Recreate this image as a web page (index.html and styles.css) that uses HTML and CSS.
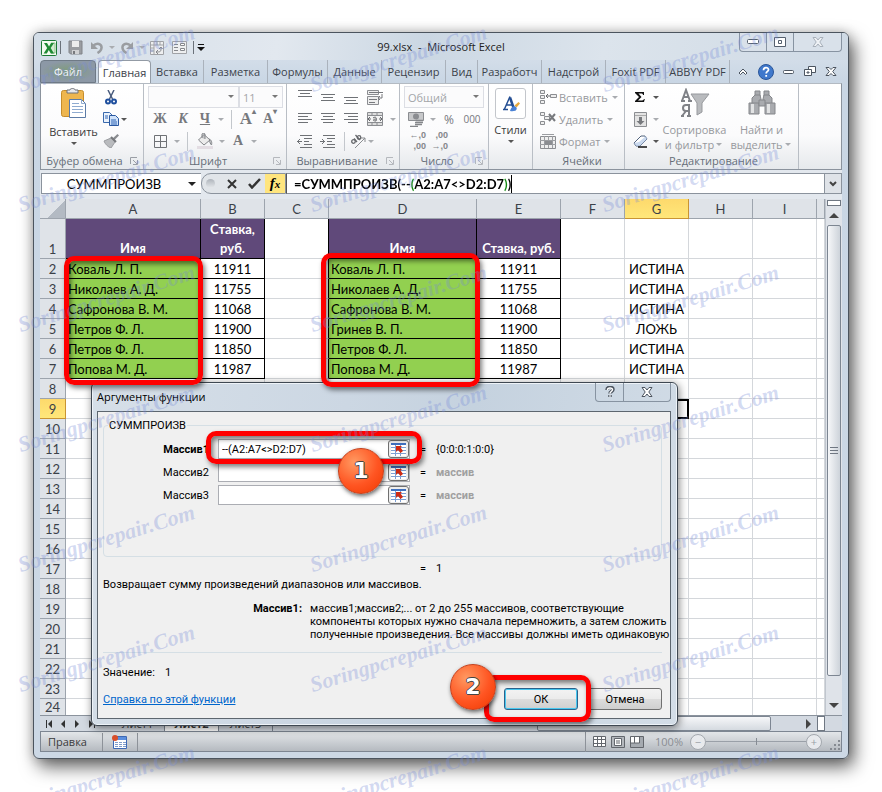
FILE: index.html
```html
<!DOCTYPE html>
<html lang="ru">

<head>
    <meta charset="utf-8">
    <title>99.xlsx - Microsoft Excel</title>
    <link rel="stylesheet" href="styles.css">
</head>

<body>
    <div class="window">
        <header class="titlebar">
            <div class="quick">
                <svg width="16" height="16" viewBox="0 0 16 16"><rect x=".5" y=".5" width="15" height="15" rx="1" fill="#f3faf0" stroke="#1c7a35"/><path d="M10 3h4v10h-4" fill="#d5ecd0" stroke="#8cc08a"/><path d="M3 3h3l2 3.500 2-3.500h3L9.700 8l3.300 5.500H9.800L7.800 10l-2 3.500H2.600L6.200 8z" fill="#1f8b34"/></svg>
                <span class="bar"></span>
                <button class="tool w-22" aria-label="Сохранить"><svg width="15" height="15" viewBox="0 0 15 15"><path d="M1 1h13v13H2.500L1 12.500z" fill="#9a9da1" stroke="#808388"/><path d="M4 1h7v6H4z" fill="#eceded"/><path d="M4 10h7v4H4z" fill="#d0d1d3"/><path d="M5 11h2v3H5z" fill="#77797d"/></svg></button>
                <button class="tool w-22" aria-label="Отменить"><svg width="14" height="13" viewBox="0 0 14 13"><path d="M3 5c4-4 9-2 8.500 2-.2 2-2 4-4 5" fill="none" stroke="#9a9da1" stroke-width="2.500"/><path d="M1 1v7h7z" fill="#9a9da1"/></svg></button>
                <i class="arr dim"></i>
                <button class="tool w-22" aria-label="Вернуть"><svg width="14" height="13" viewBox="0 0 14 13"><path d="M11 5C7 1 2 3 2.500 7c.2 2 2 4 4 5" fill="none" stroke="#9a9da1" stroke-width="2.500"/><path d="M13 1v7H6z" fill="#9a9da1"/></svg></button>
                <i class="arr dim"></i>
                <button class="tool w-22" aria-label="Сводная таблица"><svg width="14" height="14" viewBox="0 0 14 14"><path d="M.5.5h13v13H.5z" fill="#eeeff0" stroke="#a0a2a6"/><path d="M1 4h12M4 1v12M7 1v3M10 1v3M1 7h3M1 10h3" stroke="#a0a2a6"/><path d="M7 11c4 0 4-1 4-4M9 8l2-2 1.500 2M8 9l-2 2 2 2" fill="none" stroke="#85878c"/></svg></button>
                <button class="tool w-22" aria-label="Форма"><svg width="15" height="13" viewBox="0 0 15 13"><path d="M.5.5h14v12H.5z" fill="#eeeff0" stroke="#a0a2a6"/><path d="M2 3.500h4M2 6.500h4M2 9.500h4" stroke="#85878c"/><path d="M8.500 2.500h4v2h-4zM8.500 7.500h4v2h-4z" fill="#fff" stroke="#85878c"/></svg></button>
                <span class="bar"></span>
                <button class="tool w-8" aria-label="Настройка панели"><svg width="8" height="7" viewBox="0 0 8 7"><path d="M1 0h6v1H1zM0 3h8L4 7z" fill="#111"/></svg></button>
            </div>
            <h1>99.xlsx &nbsp;-&nbsp; Microsoft Excel</h1>
            <div class="caption">
                <button class="cap-min" aria-label="Свернуть"><svg width="12" height="6" viewBox="0 0 12 6"><rect x=".5" y=".5" width="11" height="4" rx="1" fill="#fff" stroke="#55606e"/></svg></button>
                <button class="cap-min" aria-label="Развернуть"><svg width="12" height="10" viewBox="0 0 12 10"><path d="M.5.5h11v9H.5zM4.500 3.500h3v3h-3z" fill="#fff" stroke="#55606e"/></svg></button>
                <button class="cap-close" aria-label="Закрыть"><svg width="12" height="10" viewBox="0 0 12 10"><path d="M1 .5h3l2 2.500L8 .5h3L7.800 5 11 9.500H8L6 7 4 9.500H1L4.200 5z" fill="#eef1f5" stroke="#a8b0ba"/></svg></button>
            </div>
        </header>

        <nav class="tabs">
            <button class="tab file">Файл</button>
            <button class="tab active">Главная</button>
            <button class="tab t-52">Вставка</button>
            <button class="tab t-64">Разметка</button>
            <button class="tab t-60">Формулы</button>
            <button class="tab t-54">Данные</button>
            <button class="tab t-64">Рецензир</button>
            <button class="tab t-32">Вид</button>
            <button class="tab t-64">Разработч</button>
            <button class="tab t-64">Надстрой</button>
            <button class="tab t-60">Foxit PDF</button>
            <button class="tab t-64">ABBYY PDF</button>
            <div class="tab-tools">
                <svg width="10" height="8" viewBox="0 0 10 8"><path d="M1 5l4-4 4 4-1.500 1.500L5 4 2.500 6.500z" fill="#fff" stroke="#4c5560"/></svg>
                <svg width="16" height="16" viewBox="0 0 16 16"><circle cx="8" cy="8" r="7.500" fill="#3f78cc" stroke="#2a5699"/><path d="M5.500 6.200c0-3.400 5-3.300 5-.5 0 1.700-2.300 1.800-2.300 3.800M8.200 11v1.700" fill="none" stroke="#fff" stroke-width="1.800"/></svg>
                <svg width="11" height="6" viewBox="0 0 11 6"><rect x=".5" y="1.500" width="10" height="3" rx="1" fill="#fff" stroke="#4c5560"/></svg>
                <svg width="12" height="11" viewBox="0 0 12 11"><path d="M4.500.5h7v6h-7z" fill="#fff" stroke="#4c5560"/><path d="M.5 3.500h7v6h-7zM3 6h2v1H3z" fill="#fff" stroke="#4c5560"/></svg>
                <svg width="12" height="9" viewBox="0 0 12 9"><path d="M1 .5h3l2 2 2-2h3l-3.300 4L11 8.500H8l-2-2-2 2H1l3.300-4z" fill="#fff" stroke="#4c5560"/></svg>
            </div>
        </nav>

        <div class="ribbon">
            <section class="group g-clip">
                <div class="group-body">
                    <button class="big w-58">
                        <svg width="28" height="32" viewBox="0 0 28 32"><rect x="1.500" y="2.500" width="22" height="26" rx="2" fill="#eeb64f" stroke="#c68d2c"/><path d="M7 5V2h3c0-2 5-2 5 0h3v3z" fill="#e8e9ec" stroke="#6d7178"/><path d="M9.500 11.500h12l4 4v14h-16z" fill="#fff" stroke="#5c7ba6"/><path d="M21.500 11.500v4h4M12 15.500h7M12 18.500h11M12 21.500h11M12 24.500h11" fill="none" stroke="#8fabd0"/></svg>
                        <span>Вставить</span>
                        <i class="arr"></i>
                    </button>
                    <div class="rows">
                        <div class="row"><button class="tool w-16" aria-label="Вырезать"><svg width="12" height="15" viewBox="0 0 12 15"><path d="M3 0l4.500 9M9 0L4.500 9" stroke="#4a5c7d" stroke-width="1.500"/><circle cx="3" cy="11.500" r="2" fill="none" stroke="#1f4f9e" stroke-width="2"/><circle cx="9" cy="11.500" r="2" fill="none" stroke="#1f4f9e" stroke-width="2"/></svg></button></div>
                        <div class="row"><button class="tool w-16" aria-label="Копировать"><svg width="16" height="14" viewBox="0 0 16 14"><path d="M.5.5h6l3 3v7h-9z" fill="#eaf2fc" stroke="#3a69ad"/><path d="M6.500 3.500h6l3 3v7h-9z" fill="#cfe2fa" stroke="#2a58a0"/><path d="M2 4h3M2 6h3M8 8h5M8 10h6M8 12h6" stroke="#2f65b5"/></svg></button><i class="arr"></i></div>
                        <div class="row"><button class="tool w-16" aria-label="Формат по образцу"><svg width="16" height="14" viewBox="0 0 16 14"><path d="M14.500 0L16 1.500l-5 5L9 5z" fill="#8a8c90"/><path d="M1 7l7-3 4 4-4 6c-3-1-6-4-7-7z" fill="#b9bbbe" stroke="#9b9da1"/><path d="M8 3l5 5" stroke="#77797d" stroke-width="2"/></svg></button></div>
                    </div>
                </div>
                <h2>Буфер обмена<svg class="launch" width="8" height="8" viewBox="0 0 8 8"><path d="M.5 7V.5H7M3 3l4 4M7.500 3v4.500H3" fill="none" stroke="#9a9ea5"/></svg></h2>
            </section>

            <section class="group g-font">
                <div class="rows">
                    <div class="row">
                        <label class="combo c-90"><select aria-label="Шрифт"><option></option></select></label>
                        <label class="combo c-44"><select aria-label="Размер"><option>11</option></select></label>
                    </div>
                    <div class="row">
                        <button class="tool w-24 glyph"><b>Ж</b></button>
                        <button class="tool w-22 glyph"><b><em>К</em></b></button>
                        <button class="tool w-22 glyph"><b><u>Ч</u></b></button>
                        <i class="arr dim"></i>
                        <span class="sep"></span>
                        <button class="tool w-22 glyph large">A<sup>▴</sup></button>
                        <button class="tool w-22 glyph">A<sup>▾</sup></button>
                    </div>
                    <div class="row">
                        <button class="tool w-24" aria-label="Границы"><svg width="13" height="13" viewBox="0 0 13 13"><path d="M.5.5h12v12H.5zM6.500.5v12M.5 6.500h12" fill="none" stroke="#6f7276"/></svg></button>
                        <i class="arr dim"></i>
                        <span class="sep"></span>
                        <button class="tool w-24" aria-label="Заливка"><svg width="16" height="16" viewBox="0 0 16 16"><path d="M7 1.500l6 5.500-6 5-5.500-5z" fill="#ececec" stroke="#85878b"/><path d="M5 5V1c0-1 3-1 3 0v5M12 6c3 1 3 4 2.500 6-1-1-2-3-2-5" fill="#85878b" stroke="#85878b" fill-opacity=".4"/><path d="M0 13h16v3H0z" fill="#e3dde3"/></svg></button>
                        <i class="arr dim"></i>
                        <button class="tool w-22 glyph">A</button>
                        <i class="arr dim"></i>
                    </div>
                </div>
                <h2>Шрифт<svg class="launch" width="8" height="8" viewBox="0 0 8 8"><path d="M.5 7V.5H7M3 3l4 4M7.500 3v4.500H3" fill="none" stroke="#b5b8bd"/></svg></h2>
            </section>

            <section class="group g-align">
                <div class="rows">
                    <div class="row">
                        <button class="tool w-23" aria-label="По верхнему краю"><svg width="14" height="16" viewBox="0 0 14 16"><path d="M0 1.500h14M2 4.500h10M0 7.500h14" stroke="#6f7276"/></svg></button>
                        <button class="tool w-23" aria-label="По середине"><svg width="14" height="16" viewBox="0 0 14 16"><path d="M0 5.500h14M2 8.500h10M0 11.500h14" stroke="#6f7276"/></svg></button>
                        <button class="tool w-23" aria-label="По нижнему краю"><svg width="14" height="16" viewBox="0 0 14 16"><path d="M0 8.500h14M2 11.500h10M0 14.500h14" stroke="#6f7276"/></svg></button>
                        <button class="tool w-26" aria-label="Перенос текста"><svg width="16" height="15" viewBox="0 0 16 15"><path d="M.5.5h11v4H.5zM.5 6.500h11v8H.5z" fill="#eee" stroke="#8b8d91"/><path d="M2 2.500h14M2 9.500h8M2 12.500h6M15 4v4h-3M13 6l-2 2 2 2" fill="none" stroke="#77797d"/></svg></button>
                    </div>
                    <div class="row">
                        <button class="tool w-23" aria-label="По левому краю"><svg width="14" height="12" viewBox="0 0 14 12"><path d="M0 .5h14M0 3.500h10M0 6.500h14M0 9.500h10" stroke="#6f7276"/></svg></button>
                        <button class="tool w-23" aria-label="По центру"><svg width="14" height="12" viewBox="0 0 14 12"><path d="M0 .5h14M2 3.500h10M0 6.500h14M2 9.500h10" stroke="#6f7276"/></svg></button>
                        <button class="tool w-23" aria-label="По правому краю"><svg width="14" height="12" viewBox="0 0 14 12"><path d="M0 .5h14M4 3.500h10M0 6.500h14M4 9.500h10" stroke="#6f7276"/></svg></button>
                        <button class="tool w-26" aria-label="Объединить"><svg width="16" height="14" viewBox="0 0 16 14"><path d="M.5.5h15v13H.5z" fill="#ddd" stroke="#8b8d91"/><path d="M1 3.500h14M1 10.500h14M5 0v3M10 0v3M5 11v3M10 11v3" stroke="#8b8d91"/><path d="M1 4h14v6H1z" fill="#f4f4f4"/><path d="M1 7h3M12 7h3M3 5L1 7l2 2M13 5l2 2-2 2M6 6c3-2 4 0 3 3-4 0-3-2 0-2" fill="none" stroke="#66686c"/></svg></button>
                        <i class="arr dim"></i>
                    </div>
                    <div class="row">
                        <button class="tool w-23" aria-label="Уменьшить отступ"><svg width="15" height="13" viewBox="0 0 15 13"><path d="M0 6.500h5M3 4L.5 6.500 3 9M3 .5h12M7 3.500h8M7 6.500h5M7 9.500h8M3 12.500h12" fill="none" stroke="#6f7276"/></svg></button>
                        <button class="tool w-23" aria-label="Увеличить отступ"><svg width="15" height="13" viewBox="0 0 15 13"><path d="M0 6.500h5M2 4l2.500 2.500L2 9M3 .5h12M7 3.500h8M7 6.500h5M7 9.500h8M3 12.500h12" fill="none" stroke="#6f7276"/></svg></button>
                        <span class="sep"></span>
                        <button class="tool w-16" aria-label="Ориентация"><svg width="16" height="14" viewBox="0 0 16 14"><path d="M5 14L15 4M15 8V4h-4" fill="none" stroke="#8b8d91"/><g fill="none" stroke="#66686c" stroke-width="1.300"><circle cx="3.500" cy="7.500" r="1.800"/><path d="M4 4.500L7 8M5.500 1l4.500 5"/><circle cx="9" cy="3.500" r="1.800"/></g></svg></button>
                        <i class="arr dim"></i>
                    </div>
                </div>
                <h2>Выравнивание<svg class="launch" width="8" height="8" viewBox="0 0 8 8"><path d="M.5 7V.5H7M3 3l4 4M7.500 3v4.500H3" fill="none" stroke="#b5b8bd"/></svg></h2>
            </section>

            <section class="group g-num">
                <div class="rows">
                    <div class="row"><label class="combo c-80"><select aria-label="Числовой формат"><option>Общий</option></select></label></div>
                    <div class="row">
                        <button class="tool w-24" aria-label="Денежный"><svg width="17" height="16" viewBox="0 0 17 16"><path d="M.5 1.500h15v8H.5z" fill="#c7c8ca" stroke="#8b8d91"/><circle cx="8" cy="5.500" r="3" fill="#8b8d91"/><path d="M8 9.500h7M7 11.500h8M7 13.500h7M2 15.500h8" stroke="#85878b" stroke-width="1.500"/></svg></button>
                        <i class="arr dim"></i>
                        <button class="tool w-22 num">%</button>
                        <button class="tool w-24 num small">000</button>
                    </div>
                    <div class="row">
                        <button class="tool w-22 digits"><span>←,0</span><span>,00</span></button>
                        <button class="tool w-22 digits"><span>,00</span><span>→,0</span></button>
                    </div>
                </div>
                <h2>Число<svg class="launch" width="8" height="8" viewBox="0 0 8 8"><path d="M.5 7V.5H7M3 3l4 4M7.500 3v4.500H3" fill="none" stroke="#b5b8bd"/></svg></h2>
            </section>

            <section class="group g-style">
                <button class="big">
                    <span class="tile"><svg width="18" height="18" viewBox="0 0 18 18"><path d="M1 14.500h5M2.500 14L8 1.500M4.500 10h6M9 14.500h5" fill="none" stroke="#234d92" stroke-width="1.500"/><path d="M8 2.500L12 14" stroke="#234d92" stroke-width="2.500"/><path d="M16.500 7l1.500 1.500-3.500 4-2-2z" fill="#e8a93a"/><path d="M8 16c1-4 4-6 6-4s0 5-6 4z" fill="#4a82d6"/></svg></span>
                    <span>Стили</span>
                    <i class="arr"></i>
                </button>
            </section>

            <section class="group g-cells">
                <div class="rows">
                    <button class="row text"><svg width="17" height="14" viewBox="0 0 17 14"><path d="M.5.5h4v3h-4zM.5 5.500h4v3h-4zM.5 10.500h4v3h-4zM10.500 4.500h6v3h-6z" fill="#eee" stroke="#8b8d91"/><path d="M6 6h4M8 4L6 6l2 2" fill="none" stroke="#66686c"/></svg>Вставить<i class="arr dim"></i></button>
                    <button class="row text"><svg width="17" height="14" viewBox="0 0 17 14"><path d="M.5.5h4v3h-4zM4.500 4.500h5v3h-5zM.5 9.500h4v3h-4z" fill="#eee" stroke="#8b8d91"/><path d="M9 2l6 7M15 2L9 9" stroke="#77797d" stroke-width="2"/></svg>Удалить<i class="arr dim"></i></button>
                    <button class="row text"><svg width="17" height="15" viewBox="0 0 17 15"><path d="M.5 2.500h15v12H.5z" fill="#eee" stroke="#8b8d91"/><path d="M0 6.500h16M0 10.500h16M4.500 2v12M8.500 2v12M12.500 2v12M2 .5h12" stroke="#9b9da1"/><path d="M5 7h7v4H5z" fill="#8b8d91"/></svg>Формат<i class="arr dim"></i></button>
                </div>
                <h2>Ячейки</h2>
            </section>

            <section class="group g-edit">
                <div class="group-body">
                    <div class="rows">
                        <div class="row"><button class="tool w-22" aria-label="Сумма"><svg width="10" height="10" viewBox="0 0 10 10"><path d="M0 0h9v3H8C8 1.500 7 1.500 6 1.500H3.500L6.500 5 3 8.500h3c1.500 0 2.500 0 3-1.500h.8L9 10H0V9l4-4L0 1z" fill="#111"/></svg></button><i class="arr"></i></div>
                        <div class="row"><button class="tool w-22" aria-label="Заполнить"><svg width="13" height="15" viewBox="0 0 13 15"><path d="M.5.5h12v14H.5z" fill="#e3e3e3" stroke="#8b8d91"/><path d="M1 3.500h11" stroke="#aaa"/><path d="M5 5h3v4h2.500l-4 4-4-4H5z" fill="#77797d"/></svg></button><i class="arr dim"></i></div>
                        <div class="row"><button class="tool w-22" aria-label="Очистить"><svg width="15" height="13" viewBox="0 0 15 13"><path d="M1 8l7-7h4l2 3-7 7H3z" fill="#fff" stroke="#51627d"/><path d="M1 8l5-1 7-6 1 3-7 7H3z" fill="#b5cbe8" fill-opacity=".7"/><path d="M5 12h9" stroke="#111" stroke-width="1.500"/></svg></button><i class="arr"></i></div>
                    </div>
                    <button class="big faded w-66"><svg width="30" height="30" viewBox="0 0 30 30"><path d="M11 6h18l-7 9v9l-5 3V15z" fill="#b9bbbe" stroke="#97999d"/><path d="M2 13L6 2l4 11M3 9h6M1 13h4M8 13h4" fill="none" stroke="#808287" stroke-width="2"/><path d="M9 28V17H6c-4 0-4 6 0 6h3M6 23l-4 5M1 28h3M7 28h4" fill="none" stroke="#808287" stroke-width="2"/></svg><span>Сортировка</span><span class="line">и фильтр<i class="arr dim"></i></span></button>
                    <button class="big faded w-66"><svg width="28" height="30" viewBox="0 0 28 30"><g fill="#a9abaf" stroke="#85878b"><path d="M7 3h5v5H7zM16 3h5v5h-5z"/><path d="M4 10l3-3h5l1 4v5H4zM24 10l-3-3h-5l-1 4v5h9z"/><path d="M1 15h10v11H1zM17 15h10v11H17z"/><path d="M11 12h6v6h-6z"/></g><path d="M3 16h3v9H3zM19 16h3v9h-3z" fill="#e2e3e4"/></svg><span>Найти и</span><span class="line">выделить<i class="arr dim"></i></span></button>
                </div>
                <h2>Редактирование</h2>
            </section>
        </div>

        <div class="formula-row">
            <div class="name-box"><input type="text" value="СУММПРОИЗВ" aria-label="Поле имени"><i class="arr black"></i></div>
            <div class="formula-tools">
                <span class="knob"></span>
                <button aria-label="Отмена"><svg width="10" height="10" viewBox="0 0 10 10"><path d="M1 1l8 8M9 1L1 9" stroke="#333" stroke-width="2"/></svg></button>
                <button aria-label="Ввод"><svg width="13" height="11" viewBox="0 0 13 11"><path d="M1 6l3 3.500L12 1" fill="none" stroke="#333" stroke-width="2.500"/></svg></button>
                <button class="fx" aria-label="Вставить функцию"><i>f</i><small>x</small></button>
            </div>
            <div class="formula"><input type="text" value="=СУММПРОИЗВ(--(A2:A7&lt;&gt;D2:D7))" aria-label="Строка формул"><span class="caret"></span></div>
            <button class="expand" aria-label="Развернуть"><svg width="8" height="6" viewBox="0 0 8 6"><path d="M1 1l3 3 3-3" fill="none" stroke="#444" stroke-width="2"/></svg></button>
        </div>

        <div class="sheet">
            <table class="grid">
                <colgroup>
                    <col class="k-26"><col class="k-135"><col class="k-64"><col class="k-64"><col class="k-148"><col class="k-84"><col class="k-64"><col class="k-64"><col class="k-64"><col class="k-64"><col>
                </colgroup>
                <thead>
                    <tr><th class="corner"></th><th>A</th><th>B</th><th>C</th><th>D</th><th>E</th><th>F</th><th class="hot">G</th><th>H</th><th>I</th><th></th></tr>
                </thead>
                <tbody id="rows">
                    <tr class="head"><th>1</th><td class="title">Имя</td><td class="title">Ставка,<br>руб.</td><td class="pre"></td><td class="title">Имя</td><td class="title">Ставка, руб.</td><td></td><td></td><td></td><td></td><td></td></tr>
                    <tr><th>2</th><td class="name">Коваль Л. П.</td><td class="pay">11911</td><td class="pre"></td><td class="name">Коваль Л. П.</td><td class="pay">11911</td><td></td><td>ИСТИНА</td><td></td><td></td><td></td></tr>
                    <tr><th>3</th><td class="name">Николаев А. Д.</td><td class="pay">11755</td><td class="pre"></td><td class="name">Николаев А. Д.</td><td class="pay">11755</td><td></td><td>ИСТИНА</td><td></td><td></td><td></td></tr>
                    <tr><th>4</th><td class="name">Сафронова В. М.</td><td class="pay">11068</td><td class="pre"></td><td class="name">Сафронова В. М.</td><td class="pay">11068</td><td></td><td>ИСТИНА</td><td></td><td></td><td></td></tr>
                    <tr><th>5</th><td class="name">Петров Ф. Л.</td><td class="pay">11900</td><td class="pre"></td><td class="name">Гринев В. П.</td><td class="pay">11900</td><td></td><td>ЛОЖЬ</td><td></td><td></td><td></td></tr>
                    <tr><th>6</th><td class="name">Петров Ф. Л.</td><td class="pay">11850</td><td class="pre"></td><td class="name">Петров Ф. Л.</td><td class="pay">11850</td><td></td><td>ИСТИНА</td><td></td><td></td><td></td></tr>
                    <tr><th>7</th><td class="name">Попова М. Д.</td><td class="pay">11987</td><td class="pre"></td><td class="name">Попова М. Д.</td><td class="pay">11987</td><td></td><td>ИСТИНА</td><td></td><td></td><td></td></tr>
                </tbody>
            </table>
            <div class="vscroll">
                <span class="split"></span>
                <svg width="10" height="5" viewBox="0 0 10 5"><path d="M0 5l5-5 5 5z" fill="#444"/></svg>
                <span class="thumb"><svg width="8" height="8" viewBox="0 0 8 8"><path d="M0 .5h8M0 3.500h8M0 6.500h8" stroke="#6f7782"/></svg></span>
                <svg width="10" height="5" viewBox="0 0 10 5"><path d="M0 0l5 5 5-5z" fill="#444"/></svg>
            </div>
        </div>

        <div class="sheet-tabs">
            <div class="nav">
                <svg width="7" height="8" viewBox="0 0 7 8"><path d="M0 0h1v8H0zM6 0v8L2 4z" fill="#333"/></svg>
                <svg width="7" height="8" viewBox="0 0 7 8"><path d="M5 0v8L1 4z" fill="#333"/></svg>
                <svg width="7" height="8" viewBox="0 0 7 8"><path d="M1 0v8l4-4z" fill="#333"/></svg>
                <svg width="7" height="8" viewBox="0 0 7 8"><path d="M6 0h1v8H6zM1 0v8l4-4z" fill="#333"/></svg>
            </div>
            <div class="names"><button>Лист1</button><button class="current">Лист2</button><button>Лист3</button></div>
            <div class="hscroll"><span class="thumb"></span><svg width="5" height="10" viewBox="0 0 5 10"><path d="M0 0v10l5-5z" fill="#444"/></svg></div>
            <span class="hsplit"></span>
        </div>

        <footer class="status">
            <span class="mode">Правка</span>
            <span class="macro"><svg width="16" height="14" viewBox="0 0 16 14"><path d="M1.500 1.500h13v12h-13z" fill="#fff" stroke="#3d69b5"/><path d="M2 2h12v3H2z" fill="#5c8fde"/><path d="M3 7.500h3M7 7.500h3M11 7.500h3M3 9.500h3M7 9.500h3M11 9.500h3M3 11.500h3M7 11.500h3M11 11.500h3" stroke="#7f9ccb"/><circle cx="3" cy="3" r="3" fill="#d94f2b"/></svg></span>
            <span class="views">
                <svg width="13" height="11" viewBox="0 0 13 11"><path d="M.5.5h12v10H.5zM.5 3.500h12M.5 7.500h12M4.500.5v10M8.500.5v10" fill="#fff" stroke="#63676d"/></svg>
                <svg width="14" height="12" viewBox="0 0 14 12"><path d="M.5.5h13v11H.5z" fill="#b4b8bd" stroke="#63676d"/><path d="M3.500 2.500h7v7h-7z" fill="#fff" stroke="#63676d"/><path d="M5 5h4M5 7h4" stroke="#63676d"/></svg>
                <svg width="14" height="12" viewBox="0 0 14 12"><path d="M.5.5h13v11H.5z" fill="#a5aab0" stroke="#63676d"/><path d="M1 1h8v6H1z" fill="#fff"/><path d="M4.500 1v6M9.500 1v6H1" fill="none" stroke="#63676d"/></svg>
            </span>
            <label class="zoom" for="zoom">100%</label>
            <span class="round">−</span>
            <input class="slider" id="zoom" type="range" min="0" max="100" value="50">
            <span class="round">+</span>
            <svg class="grip" width="11" height="11" viewBox="0 0 11 11"><path d="M8 0h2v2H8zM8 4h2v2H8zM4 4h2v2H4zM8 8h2v2H8zM4 8h2v2H4zM0 8h2v2H0z" fill="#858a91"/></svg>
        </footer>

        <div class="dialog" role="dialog" aria-labelledby="dlg">
            <div class="dlg-title">
                <span id="dlg">Аргументы функции</span>
                <div class="dlg-caption">
                    <button class="dlg-help" aria-label="Справка"><svg width="10" height="12" viewBox="0 0 10 12"><path d="M2 4c0-3.500 6-3.500 6-.5C8 5.500 5 5.500 5 7.500M5 9v2" fill="none" stroke="#4d5560" stroke-width="3.500"/><path d="M2.500 4c0-2.700 5-2.500 5-.5C7.500 5.500 5 5.500 5 7.500M5 9.300v1.400" fill="none" stroke="#fff" stroke-width="1.500"/></svg></button>
                    <button class="dlg-close" aria-label="Закрыть"><svg width="12" height="10" viewBox="0 0 12 10"><path d="M1 .5h3l2 2.500L8 .5h3L7.800 5 11 9.500H8L6 7 4 9.500H1L4.200 5z" fill="#fff" stroke="#4d5560"/></svg></button>
                </div>
            </div>
            <div class="dlg-body">
                <fieldset>
                    <legend>СУММПРОИЗВ</legend>
                    <div class="arg">
                        <label class="strong" for="m1">Массив1</label>
                        <div class="ref"><input id="m1" type="text" value="--(A2:A7&lt;&gt;D2:D7)"><button aria-label="Свернуть"><svg width="15" height="13" viewBox="0 0 15 13"><path d="M0 0h15v13H0z" fill="#fff"/><path d="M0 0h15v2H0z" fill="#3f70bf"/><path d="M0 4.500h15M0 7.500h15M0 10.500h15M4.500 2v11M9.500 2v11" stroke="#7c9fd3"/><path d="M5 3h6L9.500 4.500 12 8 9.500 10 7 7 5 9z" fill="#cf2a12"/></svg></button></div>
                        <span class="eq">=</span><span>{0:0:0:1:0:0}</span>
                    </div>
                    <div class="arg">
                        <label for="m2">Массив2</label>
                        <div class="ref"><input id="m2" type="text"><button aria-label="Свернуть"><svg width="15" height="13" viewBox="0 0 15 13"><path d="M0 0h15v13H0z" fill="#fff"/><path d="M0 0h15v2H0z" fill="#3f70bf"/><path d="M0 4.500h15M0 7.500h15M0 10.500h15M4.500 2v11M9.500 2v11" stroke="#7c9fd3"/><path d="M5 3h6L9.500 4.500 12 8 9.500 10 7 7 5 9z" fill="#cf2a12"/></svg></button></div>
                        <span class="eq">=</span><span class="type">массив</span>
                    </div>
                    <div class="arg">
                        <label for="m3">Массив3</label>
                        <div class="ref"><input id="m3" type="text"><button aria-label="Свернуть"><svg width="15" height="13" viewBox="0 0 15 13"><path d="M0 0h15v13H0z" fill="#fff"/><path d="M0 0h15v2H0z" fill="#3f70bf"/><path d="M0 4.500h15M0 7.500h15M0 10.500h15M4.500 2v11M9.500 2v11" stroke="#7c9fd3"/><path d="M5 3h6L9.500 4.500 12 8 9.500 10 7 7 5 9z" fill="#cf2a12"/></svg></button></div>
                        <span class="eq">=</span><span class="type">массив</span>
                    </div>
                </fieldset>
                <div class="result"><span class="eq">=</span><span>1</span></div>
                <p class="about">Возвращает сумму произведений диапазонов или массивов.</p>
                <div class="hint">
                    <b>Массив1:</b>
                    <p>массив1;массив2;... от 2 до 255 массивов, соответствующие<br>компоненты которых нужно сначала перемножить, а затем сложить<br>полученные произведения. Все массивы должны иметь одинаковую</p>
                </div>
                <div class="value"><span>Значение:</span><span>1</span></div>
                <div class="actions">
                    <a href="#">Справка по этой функции</a>
                    <button class="ok">ОК</button>
                    <button>Отмена</button>
                </div>
            </div>
            <span class="frame f-input"></span>
            <span class="frame f-ok"></span>
            <span class="step s-1">1</span>
            <span class="step s-2">2</span>
        </div>

        <span class="frame f-a"></span>
        <span class="frame f-d"></span>
    </div>

    <div class="marks" id="marks" aria-hidden="true"></div>

    <script src="script.js"></script>
</body>

</html>
```
FILE: styles.css
```css
* {
    box-sizing: border-box;
}

body {
    margin: 0;
    padding: 32px 33px 33px;
    background-color: white;
    font-family: "Open Sans", "Noto Sans", sans-serif;
    font-size: 11px;
    color: #3b3b3b;
    position: relative;
    overflow: hidden;
}

button,
input,
select {
    font: inherit;
    color: inherit;
    background: none;
    border: 0;
    padding: 0;
    margin: 0;
    outline: 0;
}

h1,
h2,
p {
    margin: 0;
    font-weight: normal;
}

svg {
    display: block;
    flex: none;
}

.window {
    position: relative;
    border: 1px solid #4b545e;
    border-radius: 6px;
    padding: 0 6px 6px;
    background: linear-gradient(#dde5ee, #c9d6e4 50px, #ccd8e5);
    box-shadow: 5px 8px 18px 0 rgba(0, 0, 0, .6), 0 0 12px rgba(0, 0, 0, .2);
}

/* title bar */
.titlebar {
    display: flex;
    position: relative;
    height: 27px;
    justify-content: space-between;
    margin: 0 -6px;
    padding: 0 6px;
    border-radius: 5px 5px 0 0;
    background: linear-gradient(100deg, #d3dde7, #e2e8ef 30%, #cbd7e3 48%, #dce4ec 70%, #cfdae5);
}

.quick {
    display: flex;
    align-items: center;
    padding: 2px 0 0 1px;
}

.titlebar h1 {
    position: absolute;
    inset: 5px 0 0;
    text-align: center;
    font-size: 11px;
    line-height: 17px;
    color: #222;
    pointer-events: none;
}

.bar {
    width: 1px;
    height: 13px;
    margin: 0 3px;
    background-color: #6b727a;
}

.caption {
    display: flex;
    height: 19px;
    border: 1px solid #8793a1;
    border-top: 0;
    border-radius: 0 0 4px 4px;
    background-color: #d9e1ea;
}

.caption button {
    display: flex;
    align-items: center;
    justify-content: center;
    border-right: 1px solid #8793a1;
}

.caption .cap-min {
    width: 27px;
}

.caption .cap-close {
    width: 47px;
    border: 0;
}

.tool {
    display: flex;
    align-items: center;
    justify-content: center;
    flex: none;
    height: 22px;
}

.w-8 { width: 8px; }
.w-16 { width: 16px; }
.w-22 { width: 22px; }
.w-23 { width: 23px; }
.w-24 { width: 24px; }
.w-26 { width: 26px; }

.arr {
    flex: none;
    display: inline-block;
    width: 6px;
    margin: 0 2px;
    border: 3px solid transparent;
    border-top-color: #555;
    border-bottom: 0;
}

.quick .arr {
    margin: 0 1px;
}

.arr.dim {
    border-top-color: #a9acb0;
}

.arr.black {
    border-width: 4px 4px 0;
    border-top-color: #222;
    width: 8px;
    margin-right: 5px;
}

/* tabs */
.tabs {
    display: flex;
    height: 23px;
}

.tab {
    flex: none;
    overflow: hidden;
    white-space: nowrap;
    text-align: center;
    border-right: 1px solid #aab2bc;
    font-size: 11px;
    color: #3c434b;
}

.tab.file {
    width: 56px;
    margin-right: 2px;
    border: 1px solid #6f7a86;
    border-radius: 4px 4px 0 0;
    background: radial-gradient(#7f9c78, #8c98a6 70%);
    color: white;
}

.tab.active {
    width: 53px;
    border: 1px solid #939ba5;
    border-bottom: 0;
    border-radius: 4px 4px 0 0;
    background-color: white;
}

.t-32 { width: 32px; }
.t-52 { width: 53px; }
.t-54 { width: 54px; }
.t-60 { width: 60px; }
.t-64 { width: 64px; }

.tab-tools {
    flex: 1;
    display: flex;
    align-items: center;
    justify-content: space-between;
    padding: 0 5px 0 8px;
}

/* ribbon */
.ribbon {
    display: flex;
    height: 87px;
    border: 1px solid #8b939d;
    border-top-color: #b3bac2;
    background: linear-gradient(white, #fbfbfc 60%, #e6e9ec);
}

.group {
    flex: none;
    display: flex;
    flex-direction: column;
    justify-content: space-between;
    padding-top: 2px;
    border-right: 1px solid #b9bec5;
}

.group h2 {
    position: relative;
    font-size: 11px;
    line-height: 16px;
    text-align: center;
    color: #666e78;
    padding-right: 18px;
}

.launch {
    position: absolute;
    right: 5px;
    bottom: 4px;
}

.g-clip { width: 103px; padding-left: 3px; }
.g-font { width: 143px; padding-left: 4px; }
.g-align { width: 113px; padding-left: 6px; }
.g-num { width: 89px; padding-left: 4px; }
.g-style { width: 44px; }
.g-cells { width: 92px; padding-left: 7px; }
.g-edit { width: 174px; padding-left: 4px; }

.g-cells h2,
.g-edit h2 {
    padding-right: 0;
}

.group-body {
    display: flex;
}

.row {
    display: flex;
    align-items: center;
    height: 22px;
}

.row.text {
    gap: 2px;
    color: #97999d;
}

.sep {
    width: 1px;
    height: 19px;
    margin: 0 5px;
    background-color: #c3c7cc;
}

.combo {
    position: relative;
    flex: none;
    height: 22px;
    border: 1px solid #dcdee4;
    background-color: #fbfbfc;
    color: #a3a5a9;
}

.combo select {
    width: 100%;
    height: 20px;
    padding-left: 3px;
    appearance: none;
}

.combo::after {
    content: "";
    position: absolute;
    right: 4px;
    top: 8px;
    border: 3px solid transparent;
    border-top-color: #777;
    border-bottom: 0;
}

.c-90 { width: 91px; }
.c-44 { width: 44px; }
.c-80 { width: 80px; }

.glyph {
    font-family: "Liberation Serif", serif;
    font-size: 14px;
    font-weight: bold;
    color: #77797d;
}

.glyph.large {
    font-size: 17px;
}

.glyph sup {
    font-size: 8px;
    line-height: 8px;
    align-self: flex-start;
}

.num {
    font-size: 12px;
    color: #77797d;
}

.num.small {
    font-size: 10px;
}

.digits {
    flex-direction: column;
    align-items: flex-end;
    font-family: "Liberation Sans", sans-serif;
    font-size: 9px;
    line-height: 11px;
    font-weight: bold;
    color: #85878b;
}

.big {
    display: flex;
    flex-direction: column;
    align-items: center;
    line-height: 15px;
    padding-top: 2px;
}

.big svg {
    margin-bottom: 4px;
}

.big > .arr {
    margin-top: 3px;
}

.line {
    display: flex;
    align-items: center;
}

.big.faded {
    color: #97999d;
}

.w-58 { width: 59px; }
.w-66 { width: 67px; }

.tile {
    display: flex;
    align-items: center;
    justify-content: center;
    width: 31px;
    height: 31px;
    margin-bottom: 3px;
    border: 1px solid #c3c6cb;
    border-radius: 3px;
    background-color: white;
}

.tile svg {
    margin: 0;
}

/* formula bar */
.formula-row {
    display: flex;
    height: 29px;
    padding: 3px 0 5px 1px;
    background-color: #e3e8ee;
    font-family: Lato, sans-serif;
    font-size: 13px;
    color: black;
}

.name-box {
    display: flex;
    align-items: center;
    width: 160px;
    background-color: white;
    border: 1px solid #8b939d;
    border-right: 0;
}

.name-box input {
    flex: 1;
    min-width: 0;
    text-align: center;
}

.formula-tools {
    display: flex;
    align-items: center;
    width: 85px;
    border: 1px solid #8b939d;
    border-radius: 10px 0 0 10px;
    background-color: #e1e5e9;
}

.formula-tools button {
    flex: 1;
    display: flex;
    align-items: center;
    justify-content: center;
    height: 100%;
}

.formula-tools .fx {
    flex: none;
    width: 20px;
    background-color: #ffe57e;
    font-family: "Liberation Serif", serif;
    font-weight: bold;
    font-size: 15px;
}

.fx small {
    font-style: italic;
    font-size: 11px;
}

.knob {
    width: 9px;
    height: 9px;
    margin: 0 6px 0 4px;
    border-radius: 50%;
    background: linear-gradient(#aeb4bb, #e5e8eb);
}

.formula {
    flex: 1;
    display: flex;
    align-items: center;
    padding-left: 7px;
    background-color: white;
    border: 1px solid #8b939d;
    border-left-color: #555;
}

/* inner pair of brackets is green */
.formula input {
    field-sizing: content;
    font-weight: bold;
    color: transparent;
    background: linear-gradient(90deg, black 116px, #128a12 116px 121px, black 121px 209px, #128a12 209px 213px, black 213px);
    background-clip: text;
}

.caret {
    width: 1px;
    height: 18px;
    background-color: black;
}

.expand {
    display: flex;
    align-items: center;
    justify-content: center;
    width: 17px;
    border: 1px solid #8b939d;
    border-left: 0;
    background-color: #dfe3e8;
}

/* sheet */
.sheet {
    display: flex;
}

.grid {
    flex: 1;
    min-width: 0;
    table-layout: fixed;
    border-spacing: 0;
    background-color: white;
    font-family: Lato, sans-serif;
    font-size: 13px;
    line-height: 18px;
    color: black;
}

.k-26 { width: 26px; }
.k-64 { width: 64px; }
.k-84 { width: 84px; }
.k-135 { width: 135px; }
.k-148 { width: 148px; }

.grid th,
.grid td {
    height: 20px;
    padding: 0;
    text-align: center;
    vertical-align: bottom;
    border: 0 solid #d4d7db;
    border-width: 0 1px 1px 0;
}

.grid th {
    font-weight: normal;
    color: #3b4148;
    background-color: #dfe3e8;
    border-color: #9da4ad;
}

.grid tr.head > * {
    height: 40px;
}

.grid tr.last > * {
    height: 16px;
    line-height: 16px;
    border-bottom: 0;
}

.grid th.corner {
    background: linear-gradient(135deg, #dfe3e8 60%, #b3bac3 60%);
}

.grid th.hot {
    background: linear-gradient(#fdd96c, #ffe77a);
    border-color: #c99433;
}

.grid td.title {
    background-color: #60497a;
    color: white;
    font-weight: bold;
    line-height: 19px;
    border-color: black;
}

.grid td.name {
    background-color: #92d050;
    text-align: left;
    padding-left: 2px;
    border-color: black;
}

.grid td.pay {
    border-color: black;
}

.grid td.pre:has(+ .name, + .title) {
    border-right-color: black;
}

.grid td.cursor {
    border: 2px solid black;
}

.vscroll {
    width: 17px;
    display: flex;
    flex-direction: column;
    align-items: center;
    gap: 7px;
    padding: 1px 0 7px;
    background-color: #dfe3e9;
    border-left: 1px solid #c0c6ce;
}

.split {
    width: 14px;
    height: 6px;
    border: 1px solid #6f7782;
    background-color: white;
}

.vscroll .thumb {
    flex: 1;
    display: flex;
    align-items: center;
    justify-content: center;
    width: 14px;
    margin-bottom: 20px;
    border: 1px solid #7d8692;
    border-radius: 2px;
    background: linear-gradient(90deg, #f6f7f9, #cdd3da);
}

/* sheet tabs */
.sheet-tabs {
    display: flex;
    height: 16px;
    background-color: #d3d9e1;
    border-top: 1px solid #8b939d;
}

.nav {
    display: flex;
    align-items: center;
    gap: 7px;
    padding: 0 6px;
}

.names {
    display: flex;
    padding-left: 10px;
    width: 436px;
}

.names button {
    width: 54px;
    border-right: 1px solid #7d8692;
}

.names .current {
    background-color: white;
    font-weight: bold;
}

.hscroll {
    flex: 1;
    display: flex;
    align-items: center;
    justify-content: space-between;
    padding-right: 6px;
}

.hscroll .thumb {
    width: 234px;
    height: 15px;
    border: 1px solid #7d8692;
    border-radius: 2px;
    background: linear-gradient(#f6f7f9, #d5dae0);
}

.hsplit {
    width: 8px;
    margin-right: 17px;
    border: 1px solid #6f7782;
    background-color: white;
}

/* status bar */
.status {
    display: flex;
    align-items: center;
    height: 21px;
    border: 1px solid #7d8692;
    background: linear-gradient(#e3e6e9, #b5bac0);
}

.mode {
    width: 61px;
    padding-left: 7px;
}

.macro {
    width: 36px;
    padding: 2px 9px;
    border: 1px solid #8d9299;
    border-width: 0 1px;
}

.views {
    display: flex;
    align-items: center;
    gap: 5px;
    margin-left: auto;
    padding: 4px 0 4px 7px;
    border-left: 1px solid #8d9299;
}

.zoom {
    margin: 0 7px 0 11px;
    color: #8a8d92;
}

.round {
    width: 16px;
    height: 16px;
    border: 1px solid #a3a8ae;
    border-radius: 50%;
    background-color: #e8eaed;
    text-align: center;
    line-height: 14px;
    color: #9a9fa6;
}

.slider {
    width: 100px;
    height: 10px;
    appearance: none;
    background: linear-gradient(#9aa0a8, #9aa0a8) center / 100% 1px no-repeat;
}

.slider::-webkit-slider-thumb {
    appearance: none;
    width: 1px;
    height: 7px;
    background-color: #858b93;
}

.grip {
    align-self: flex-end;
    margin-left: 8px;
}

/* dialog */
.dialog {
    position: absolute;
    left: 57px;
    top: 349px;
    width: 587px;
    padding: 0 6px 6px 5px;
    border: 1px solid #3f4852;
    border-radius: 6px;
    background: linear-gradient(100deg, #d6dfe8, #ccd7e3 40%, #c5d2df 60%, #d3dde7);
    box-shadow: inset 0 0 0 1px #eef3f8, 1px 2px 8px rgba(0, 0, 0, .5);
    font-family: Roboto, sans-serif;
    font-size: 11px;
    line-height: 13px;
    color: black;
}

.dlg-title {
    display: flex;
    justify-content: space-between;
    height: 28px;
    font-family: "Open Sans", sans-serif;
    line-height: 28px;
}

.dlg-caption {
    display: flex;
    height: 19px;
    border: 1px solid #8793a1;
    border-top: 0;
    border-radius: 0 0 4px 4px;
}

.dlg-caption button {
    display: flex;
    align-items: center;
    justify-content: center;
}

.dlg-help {
    width: 28px;
    border-right: 1px solid #8793a1;
}

.dlg-close {
    width: 46px;
}

.dlg-body {
    border: 1px solid #5d666f;
    padding: 7px 8px 8px 5px;
    background-color: #f0f0f0;
}

.dialog fieldset {
    margin: 0;
    height: 138px;
    min-width: 0;
    padding: 7px 0 0;
    border: 1px solid #d5dfe5;
    border-radius: 4px;
}

.dialog legend {
    margin-left: 4px;
    padding: 0 1px;
}

.arg {
    display: grid;
    grid-template-columns: 105px 192px 8px 1fr;
    column-gap: 9px;
    align-items: center;
    height: 20px;
    margin-bottom: 3px;
}

.arg label {
    text-align: right;
}

.strong {
    font-weight: bold;
}

.ref {
    display: flex;
    height: 20px;
    border: 1px solid #abadb3;
    background-color: white;
}

.ref input {
    flex: 1;
    min-width: 0;
    padding-left: 3px;
}

.ref button {
    display: flex;
    align-items: center;
    justify-content: center;
    width: 21px;
    border: 1px solid #707070;
    border-radius: 3px;
    background-color: #eee;
}

.type {
    font-weight: bold;
    color: #a0a0a0;
}

.eq {
    text-align: center;
}

.result {
    display: grid;
    grid-template-columns: 8px 1fr;
    column-gap: 9px;
    padding: 5px 0 3px 316px;
}

.hint {
    display: grid;
    grid-template-columns: 199px 1fr;
    column-gap: 8px;
    padding: 11px 0 11px;
    border-bottom: 1px solid #d5dfe5;
    white-space: nowrap;
}

.hint b {
    text-align: right;
}

.value {
    display: flex;
    gap: 10px;
    padding: 13px 0 9px;
}

.actions {
    display: flex;
    align-items: center;
    gap: 10px;
}

.actions a {
    margin-right: auto;
    color: #0066cc;
}

.actions button {
    width: 74px;
    height: 22px;
    border: 1px solid #707070;
    border-radius: 3px;
    background: linear-gradient(#f3f3f3, #ebebeb 50%, #dddddd 50%, #cfcfcf);
}

.actions .ok {
    border-color: #2c628b;
    box-shadow: inset 0 0 0 1px #48c8f0;
}

/* callouts drawn over the window */
.frame {
    position: absolute;
    border: 5px solid red;
    border-radius: 10px;
    box-shadow: 2px 3px 5px rgba(0, 0, 0, .5), inset 2px 3px 5px rgba(0, 0, 0, .5);
    pointer-events: none;
}

.f-a {
    left: 30px;
    top: 223px;
    width: 139px;
    height: 129px;
}

.f-d {
    left: 287px;
    top: 220px;
    width: 159px;
    height: 134px;
}

.f-input {
    left: 114px;
    top: 48px;
    width: 216px;
    height: 33px;
}

.f-ok {
    left: 392px;
    top: 292px;
    width: 107px;
    height: 47px;
}

.step {
    position: absolute;
    width: 46px;
    height: 46px;
    border-radius: 50%;
    border: 1px solid #c4401c;
    background: radial-gradient(circle at 35% 30%, #ff9a62, #ff5522 55%, #f03800);
    box-shadow: 1px 2px 4px rgba(0, 0, 0, .6);
    text-align: center;
    font-family: "DejaVu Sans", sans-serif;
    font-size: 22px;
    font-weight: bold;
    line-height: 44px;
    color: white;
    text-shadow: 1px 0 #444, -1px 0 #444, 0 1px #444, 0 -1px #444;
}

.s-1 {
    left: 246px;
    top: 65px;
}

.s-2 {
    left: 358px;
    top: 281px;
}

/* repeated site mark */
.marks {
    position: absolute;
    inset: 0;
    display: grid;
    grid-template-columns: repeat(3, 292px);
    grid-auto-rows: 120px;
    padding-left: 22px;
    overflow: hidden;
    pointer-events: none;
    font-family: "Liberation Serif", serif;
    font-style: italic;
    font-weight: bold;
    font-size: 22px;
    line-height: 24px;
    color: rgba(120, 140, 215, .32);
}

.marks span {
    align-self: start;
    justify-self: start;
    margin-top: 73px;
    transform: rotate(-17deg);
    transform-origin: 0 100%;
}
```
FILE: script.js
```js
var rows = document.getElementById("rows");

for (var n = 8; n <= 24; n++) {
    var tr = document.createElement("tr");
    tr.innerHTML = "<th>" + n + "</th>" + "<td></td>".repeat(10);
    if (n == 9) {
        tr.cells[0].className = "hot";
        tr.cells[7].className = "cursor";
    }
    if (n == 24) {
        tr.className = "last";
    }
    rows.appendChild(tr);
}

var marks = document.getElementById("marks");

for (var i = 0; i < 21; i++) {
    var mark = document.createElement("span");
    mark.textContent = "Soringpcrepair.Com";
    marks.appendChild(mark);
}
```
